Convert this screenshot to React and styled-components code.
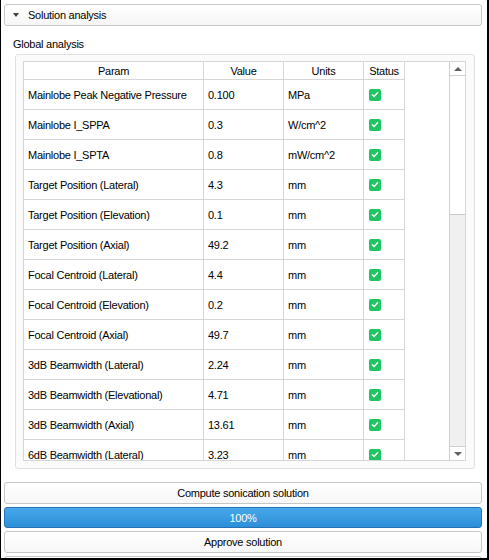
import React from 'react';
import styled, {createGlobalStyle} from 'styled-components';

const GlobalStyle = createGlobalStyle`
    body {
        margin: 0;
        background: #ffffff;
        font-family: "Liberation Sans", Arial, sans-serif;
        font-size: 11px;
        letter-spacing: -0.25px;
        color: #000000;
    }
`;

const Window = styled.div`
    width: 489px;
    height: 560px;
    box-sizing: border-box;
    border-left: 1px solid #000000;
    border-right: 2px solid #000000;
    border-bottom: 2px solid #000000;
    padding: 4px 5px 0 3px;
    display: flex;
    flex-direction: column;
    overflow: hidden;
    background: #ffffff;

    & > * {
        flex: none;
    }
`;

const SectionToggle = styled.div`
    height: 22px;
    box-sizing: border-box;
    border: 1px solid #c8c8c8;
    border-radius: 3px;
    background: linear-gradient(#ffffff, #f6f6f6);
    display: flex;
    align-items: center;
    gap: 9px;
    padding-left: 8px;
`;

const Arrow = styled.span`
    width: 0;
    height: 0;
    border-left: 3.5px solid transparent;
    border-right: 3.5px solid transparent;
    border-top: 4px solid #404040;
`;

const GroupLabel = styled.div`
    padding: 11px 0 0 9px;
    height: 17px;
    line-height: 14px;
`;

const GroupFrame = styled.div`
    margin: 0 7px 0 11px;
    border: 1px solid #e0e0e0;
    border-radius: 3px;
    background: #fbfbfb;
    padding: 6px 8px 7px 7px;
`;

const Viewport = styled.div`
    height: 400px;
    box-sizing: border-box;
    border: 1px solid #d6d6d6;
    background: #ffffff;
    display: flex;
    overflow: hidden;
`;

const TableArea = styled.div`
    flex: 1;
    overflow: hidden;
`;

const Row = styled.div`
    display: flex;
    height: ${p => (p.$header ? 18 : 30)}px;
    box-sizing: border-box;
`;

const Cell = styled.div`
    width: ${p => p.$w}px;
    flex: none;
    box-sizing: border-box;
    border-right: 1px solid #d6d6d6;
    border-bottom: 1px solid #d6d6d6;
    display: flex;
    align-items: center;
    justify-content: ${p => (p.$center ? 'center' : 'flex-start')};
    padding-left: ${p => (p.$center ? 0 : 4)}px;
    white-space: nowrap;
`;

const Check = styled.span`
    width: 12px;
    height: 12px;
    border-radius: 2px;
    background: #1fc563;
    display: flex;
    align-items: center;
    justify-content: center;
    margin-left: 1px;
`;

const Scrollbar = styled.div`
    width: 15px;
    flex: none;
    border-left: 1px solid #d0d0d0;
    display: flex;
    flex-direction: column;
    background: #ffffff;
`;

const ScrollButton = styled.div`
    height: 14px;
    flex: none;
    display: flex;
    align-items: center;
    justify-content: center;
    border-${p => (p.$down ? 'top' : 'bottom')}: 1px solid #d0d0d0;
    box-sizing: border-box;
`;

const Tri = styled.span`
    width: 0;
    height: 0;
    border-left: 4px solid transparent;
    border-right: 4px solid transparent;
    ${p => (p.$down ? 'border-top' : 'border-bottom')}: 4px solid #606060;
`;

const Track = styled.div`
    flex: 1;
    display: flex;
    flex-direction: column;
`;

const Thumb = styled.div`
    margin-top: 138px;
    flex: 1;
    background: #f0f0f0;
    border-top: 1px solid #c8c8c8;
`;

const Buttons = styled.div`
    margin-top: 13px;
    display: flex;
    flex-direction: column;
    gap: 3px;
`;

const PushButton = styled.div`
    height: 22px;
    flex: none;
    box-sizing: border-box;
    border: 1px solid #c6c6c6;
    border-radius: 3px;
    background: linear-gradient(#ffffff, #f7f7f7);
    display: flex;
    align-items: center;
    justify-content: center;
`;

const Progress = styled.div`
    height: 21px;
    flex: none;
    box-sizing: border-box;
    border: 1px solid #2670b4;
    border-radius: 3px;
    background: linear-gradient(#46a7ea, #2d8fd8);
    color: #ffffff;
    display: flex;
    align-items: center;
    justify-content: center;
`;

const columns = [
    {key: 'param', title: 'Param', w: 180},
    {key: 'value', title: 'Value', w: 80},
    {key: 'units', title: 'Units', w: 80},
    {key: 'status', title: 'Status', w: 41},
];

const rows = [
    ['Mainlobe Peak Negative Pressure', '0.100', 'MPa'],
    ['Mainlobe I_SPPA', '0.3', 'W/cm^2'],
    ['Mainlobe I_SPTA', '0.8', 'mW/cm^2'],
    ['Target Position (Lateral)', '4.3', 'mm'],
    ['Target Position (Elevation)', '0.1', 'mm'],
    ['Target Position (Axial)', '49.2', 'mm'],
    ['Focal Centroid (Lateral)', '4.4', 'mm'],
    ['Focal Centroid (Elevation)', '0.2', 'mm'],
    ['Focal Centroid (Axial)', '49.7', 'mm'],
    ['3dB Beamwidth (Lateral)', '2.24', 'mm'],
    ['3dB Beamwidth (Elevational)', '4.71', 'mm'],
    ['3dB Beamwidth (Axial)', '13.61', 'mm'],
    ['6dB Beamwidth (Lateral)', '3.23', 'mm'],
];

const CheckIcon = () => (
    <Check>
        <svg width="8" height="7" viewBox="0 0 8 7">
            <path d="M1 3.6 L3.1 5.5 L7 1.2" fill="none" stroke="#ffffff" strokeWidth="1.3" />
        </svg>
    </Check>
);

export default function App() {
    return (
        <Window>
            <GlobalStyle />
            <SectionToggle>
                <Arrow />
                <span>Solution analysis</span>
            </SectionToggle>
            <GroupLabel>Global analysis</GroupLabel>
            <GroupFrame>
                <Viewport>
                    <TableArea>
                        <Row $header>
                            {columns.map(col => (
                                <Cell key={col.key} $w={col.w} $center>{col.title}</Cell>
                            ))}
                        </Row>
                        {rows.map(row => (
                            <Row key={row[0]}>
                                <Cell $w={180}>{row[0]}</Cell>
                                <Cell $w={80}>{row[1]}</Cell>
                                <Cell $w={80}>{row[2]}</Cell>
                                <Cell $w={41}>
                                    <CheckIcon />
                                </Cell>
                            </Row>
                        ))}
                    </TableArea>
                    <Scrollbar>
                        <ScrollButton><Tri /></ScrollButton>
                        <Track>
                            <Thumb />
                        </Track>
                        <ScrollButton $down><Tri $down /></ScrollButton>
                    </Scrollbar>
                </Viewport>
            </GroupFrame>
            <Buttons>
                <PushButton>Compute sonication solution</PushButton>
                <Progress>100%</Progress>
                <PushButton>Approve solution</PushButton>
                <PushButton />
            </Buttons>
        </Window>
    );
}
